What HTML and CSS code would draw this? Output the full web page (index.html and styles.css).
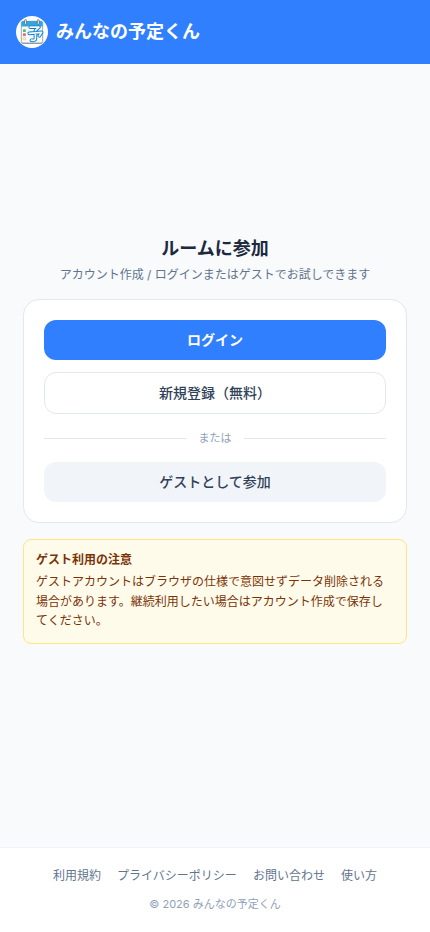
FILE: index.html
```html
<!DOCTYPE html>
<html lang="ja">
<head>
<meta charset="utf-8">
<meta name="viewport" content="width=device-width, initial-scale=1">
<title>みんなの予定くん</title>
<link rel="stylesheet" href="styles.css">
</head>
<body>
<header class="header">
  <svg class="logo" viewBox="0 0 32 32" aria-hidden="true">
    <circle cx="16" cy="16" r="16" fill="#fff"/>
    <rect x="5.3" y="5.3" width="21.4" height="22.2" rx="2" fill="#f7fafc" stroke="#76828f" stroke-width=".7"/>
    <path d="M5.3 10.5V7q0-2 2-2h17.4q2 0 2 2v3.5z" fill="#35a5df"/>
    <path d="M6 27.1h20" stroke="#8b969f" stroke-width="1"/>
    <g fill="#dce4e8" stroke="#526575" stroke-width=".7">
      <rect x="8.5" y="3.6" width="2" height="4.8" rx="1"/>
      <rect x="21.3" y="3.6" width="2" height="4.8" rx="1"/>
    </g>
    <rect x="7" y="13.2" width="2.8" height="2.8" rx=".5" fill="#52ba7b"/>
    <rect x="7" y="17.3" width="2.8" height="2.8" rx=".5" fill="#ed6570"/>
    <rect x="7.2" y="21.4" width="2.4" height="2.4" rx=".6" fill="#fff6d5" stroke="#efc66d" stroke-width=".7"/>
    <g fill="none" stroke-linecap="round" stroke-linejoin="round">
      <path d="M14.2 11.2h8.8l-3.6 3.2M13.2 17.4l12.4-1-2.2 3.4M19.4 17v5.8q0 2-4 1.4" stroke="#1680c6" stroke-width="3.6"/>
      <path d="M14.2 11.2h8.8l-3.6 3.2M13.2 17.4l12.4-1-2.2 3.4M19.4 17v5.8q0 2-4 1.4" stroke="#edfaff" stroke-width="1.7"/>
    </g>
  </svg>
  <span class="brand">みんなの予定くん</span>
</header>
<main class="main">
  <div class="content">
    <h1 class="title">ルームに参加</h1>
    <p class="subtitle">アカウント作成 / ログインまたはゲストでお試しできます</p>
    <section class="card">
      <button class="button button-primary">ログイン</button>
      <button class="button button-outline">新規登録（無料）</button>
      <div class="divider">または</div>
      <button class="button button-muted">ゲストとして参加</button>
    </section>
    <section class="notice">
      <h2 class="notice-title">ゲスト利用の注意</h2>
      <p class="notice-text">ゲストアカウントはブラウザの仕様で意図せずデータ削除される場合があります。継続利用したい場合はアカウント作成で保存してください。</p>
    </section>
  </div>
</main>
<footer class="footer">
  <nav class="links">
    <a>利用規約</a><a>プライバシーポリシー</a><a>お問い合わせ</a><a>使い方</a>
  </nav>
  <p class="copyright">© 2026 みんなの予定くん</p>
</footer>
</body>
</html>
```
FILE: styles.css
```css
* { box-sizing: border-box; margin: 0; padding: 0; }
body {
  min-height: 100vh;
  display: flex;
  flex-direction: column;
  background: #f8fafc;
  color: #1d293d;
  font-family: Inter, "Noto Sans CJK JP", sans-serif;
}
.header {
  height: 64px;
  padding: 0 16px;
  display: flex;
  align-items: center;
  gap: 8px;
  background: #307fff;
  color: #fff;
}
.logo { width: 32px; height: 32px; flex: none; }
.brand { font-size: 18px; line-height: 28px; font-weight: 700; }
.main {
  flex: 1;
  display: flex;
  align-items: center;
  justify-content: center;
  padding: 0 16px 32px;
}
.content { width: 100%; max-width: 384px; }
.title { font-size: 18px; line-height: 28px; font-weight: 700; text-align: center; }
.subtitle {
  margin: 4px 0 16px;
  color: #62748e;
  font-size: 12px;
  line-height: 16px;
  text-align: center;
}
.card {
  display: flex;
  flex-direction: column;
  gap: 12px;
  padding: 20px;
  border: 1px solid #e2e8f0;
  border-radius: 16px;
  background: #fff;
}
.button {
  width: 100%;
  padding: 10px 16px;
  border: 0;
  border-radius: 12px;
  color: #314158;
  font: 500 14px/20px Inter, "Noto Sans CJK JP", sans-serif;
}
.button-primary { background: #307fff; color: #fff; font-weight: 600; }
.button-outline { border: 1px solid #e2e8f0; background: #fff; }
.button-muted { background: #f1f5f9; }
.divider {
  height: 24px;
  display: flex;
  align-items: center;
  gap: 12px;
  color: #90a1b9;
  font-size: 11px;
  line-height: 16.5px;
}
.divider::before, .divider::after {
  content: "";
  flex: 1;
  height: 1px;
  background: #e2e8f0;
}
.notice {
  margin-top: 16px;
  padding: 12px;
  border: 1px solid #fee685;
  border-radius: 8px;
  background: #fffbeb;
  color: #7b3306;
  font-size: 12px;
}
.notice-title { font-size: 12px; line-height: 16px; font-weight: 600; }
.notice-text { margin-top: 4px; line-height: 19.5px; }
.footer {
  padding: 20px 16px;
  border-top: 1px solid #f1f5f9;
  background: #fff;
  text-align: center;
}
.links {
  display: flex;
  justify-content: center;
  gap: 16px;
  color: #62748e;
  font-size: 12px;
  line-height: 16px;
}
.copyright { margin-top: 12px; color: #90a1b9; font-size: 11px; line-height: 16.5px; }
```
